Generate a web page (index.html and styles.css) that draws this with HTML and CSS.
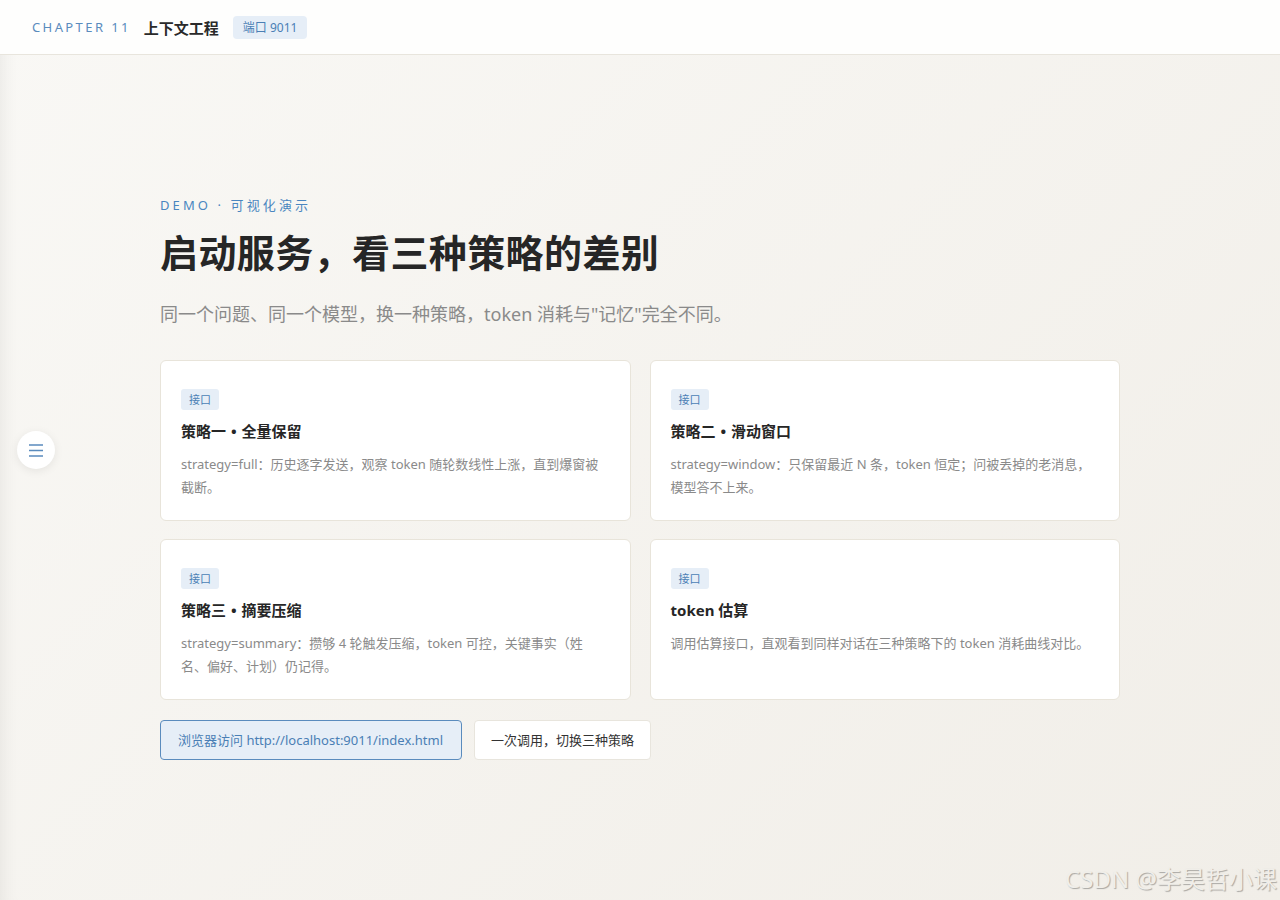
FILE: index.html
```html
<!DOCTYPE html>
<html lang="zh-CN">
<head>
    <meta charset="utf-8">
    <meta name="viewport" content="width=device-width, initial-scale=1">
    <title>上下文工程 · Demo</title>
    <link rel="stylesheet" href="styles.css">
</head>
<body>
    <header class="topbar">
        <span class="chapter">CHAPTER 11</span>
        <span class="topic">上下文工程</span>
        <span class="port">端口 9011</span>
    </header>

    <button class="menu-toggle" aria-label="目录">
        <svg width="14" height="13" viewBox="0 0 14 13">
            <path d="M0 1h14M0 6.5h14M0 12h14" stroke="#5a8bbd" stroke-width="1.5"/>
        </svg>
    </button>

    <main class="page">
        <section class="demo">
            <div class="eyebrow">DEMO · 可视化演示</div>
            <h1 class="title">启动服务，看三种策略的差别</h1>
            <p class="lead">同一个问题、同一个模型，换一种策略，token 消耗与"记忆"完全不同。</p>

            <div class="cards">
                <div class="card">
                    <span class="tag">接口</span>
                    <h3>策略一 <span class="dot">•</span> 全量保留</h3>
                    <p>strategy=full：历史逐字发送，观察 token 随轮数线性上涨，直到爆窗被截断。</p>
                </div>
                <div class="card">
                    <span class="tag">接口</span>
                    <h3>策略二 <span class="dot">•</span> 滑动窗口</h3>
                    <p>strategy=window：只保留最近 N 条，token 恒定；问被丢掉的老消息，模型答不上来。</p>
                </div>
                <div class="card">
                    <span class="tag">接口</span>
                    <h3>策略三 <span class="dot">•</span> 摘要压缩</h3>
                    <p>strategy=summary：攒够 4 轮触发压缩，token 可控，关键事实（姓名、偏好、计划）仍记得。</p>
                </div>
                <div class="card">
                    <span class="tag">接口</span>
                    <h3>token 估算</h3>
                    <p>调用估算接口，直观看到同样对话在三种策略下的 token 消耗曲线对比。</p>
                </div>
            </div>

            <div class="actions">
                <a class="btn primary" href="#">浏览器访问 http://localhost:9011/index.html</a>
                <a class="btn" href="#">一次调用，切换三种策略</a>
            </div>
        </section>
    </main>

    <div class="watermark">CSDN @李昊哲小课</div>
</body>
</html>
```

FILE: styles.css
```css
body {
    margin: 0;
    padding: 0;
    height: 100vh;
    font-family: "Noto Sans", "Noto Sans CJK SC", sans-serif;
    color: #2a2a2a;
    background: linear-gradient(135deg, #f9f8f5, #f1eee8);
    box-shadow: inset 18px 0 18px -16px rgba(0, 0, 0, 0.07);
    overflow: hidden;
}

.topbar {
    height: 54px;
    display: flex;
    align-items: center;
    padding: 0 32px;
    background: #fefefd;
    border-bottom: 1px solid #e8e5dd;
}

.chapter {
    font-size: 13px;
    letter-spacing: 2.4px;
    color: #5a8bbd;
    margin-right: 13px;
}

.topic {
    font-size: 15px;
    font-weight: 700;
    color: #2a2a2a;
    margin-right: 14px;
}

.port {
    font-size: 12px;
    color: #4a7fb5;
    background: #e6eef7;
    border-radius: 4px;
    padding: 3px 10px;
    line-height: 17px;
}

.menu-toggle {
    position: absolute;
    left: 17px;
    top: 431px;
    width: 38px;
    height: 38px;
    border: none;
    border-radius: 50%;
    background: #fff;
    box-shadow: 0 2px 10px rgba(0, 0, 0, 0.08);
    display: flex;
    align-items: center;
    justify-content: center;
    padding: 0;
    cursor: pointer;
}

.page {
    display: flex;
    justify-content: center;
    padding-top: 141px;
}

.demo {
    width: 960px;
}

.eyebrow {
    font-size: 13px;
    line-height: 18px;
    letter-spacing: 3.1px;
    color: #4a86c0;
}

.title {
    margin: 15px 0 0;
    font-size: 38px;
    line-height: 46px;
    font-weight: 700;
    letter-spacing: 0.4px;
    color: #262626;
}

.lead {
    margin: 26px 0 0;
    font-size: 18px;
    line-height: 26px;
    color: #8a8a8a;
}

.cards {
    display: grid;
    grid-template-columns: 1fr 1fr;
    gap: 18px 19px;
    margin-top: 33px;
}

.card {
    background: #fff;
    border: 1px solid #e8e4da;
    border-radius: 6px;
    padding: 26px 28px 21px 20px;
}

.tag {
    display: inline-block;
    font-size: 11px;
    line-height: 15px;
    padding: 3px 8px;
    color: #4a7fb5;
    background: #e6eef7;
    border-radius: 3px;
}

.card h3 {
    margin: 11px 0 0;
    font-size: 15px;
    line-height: 20px;
    font-weight: 700;
    color: #262626;
}

.card h3 .dot {
    margin: 0 1px;
}

.card p {
    margin: 12px 0 0;
    font-size: 13px;
    line-height: 23px;
    color: #8a8a8a;
}

.actions {
    display: flex;
    gap: 12px;
    margin-top: 20px;
}

.btn {
    display: inline-block;
    font-size: 13px;
    line-height: 38px;
    padding: 0 16px;
    color: #333;
    background: #fff;
    border: 1px solid #e8e5dd;
    border-radius: 4px;
    text-decoration: none;
}

.btn.primary {
    padding: 0 18px 0 17px;
    color: #4a7fb5;
    background: #e6eef7;
    border-color: #5a8bbd;
}

.watermark {
    position: absolute;
    right: 3px;
    bottom: 5px;
    font-size: 24px;
    color: #f0eee9;
    text-shadow: 1px 1px 1px rgba(0, 0, 0, 0.3);
    pointer-events: none;
}
```
